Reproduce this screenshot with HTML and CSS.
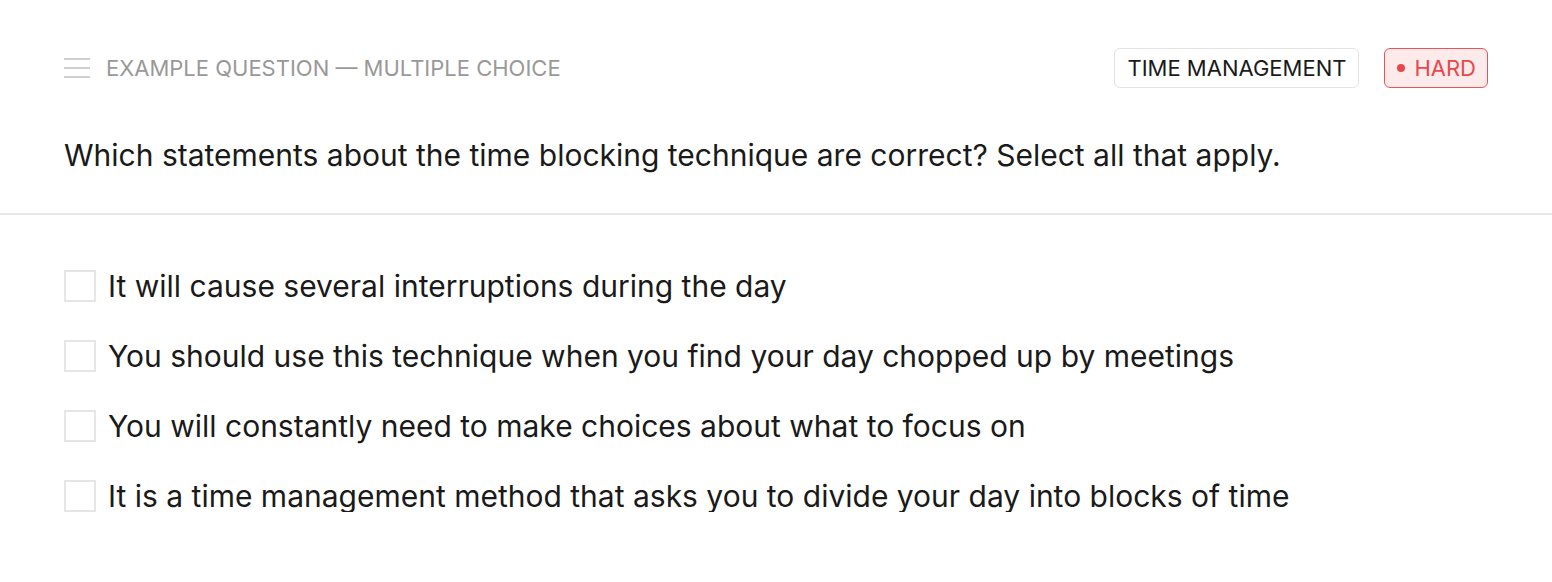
FILE: index.html
```html
<!DOCTYPE html>
<html>
<head>
<meta charset="utf-8">
<link rel="stylesheet" href="styles.css">
</head>
<body>
<div class="card">
  <header class="top">
    <div class="top-left">
      <svg class="menu" width="26" height="20" viewBox="0 0 26 20"><rect x="0" y="0" width="26" height="2" fill="#d0d0d0"/><rect x="0" y="9" width="26" height="2" fill="#d0d0d0"/><rect x="0" y="18" width="26" height="2" fill="#d0d0d0"/></svg>
      <span class="kicker">EXAMPLE QUESTION — MULTIPLE CHOICE</span>
    </div>
    <div class="tags">
      <span class="tag">TIME MANAGEMENT</span>
      <span class="tag hard"><span class="dot"></span>HARD</span>
    </div>
  </header>
  <p class="question">Which statements about the time blocking technique are correct? Select all that apply.</p>
  <hr class="divider">
  <ul class="options">
    <li class="option"><span class="box"></span><span>It will cause several interruptions during the day</span></li>
    <li class="option"><span class="box"></span><span>You should use this technique when you find your day chopped up by meetings</span></li>
    <li class="option"><span class="box"></span><span>You will constantly need to make choices about what to focus on</span></li>
    <li class="option"><span class="box"></span><span>It is a time management method that asks you to divide your day into blocks of time</span></li>
  </ul>
</div>
</body>
</html>
```
FILE: styles.css
```css
html, body { margin: 0; padding: 0; background: #fff; }
body { font-family: Inter, "Noto Sans", sans-serif; color: #1a1a1a; }
.card { width: 1552px; }
.top { display: flex; justify-content: space-between; align-items: center; padding: 48px 64px 0 64px; height: 40px; }
.top-left { display: flex; align-items: center; gap: 16px; }
.menu { display: block; }
.kicker { font-size: 22px; color: #999; }
.tags { display: flex; gap: 25px; align-items: center; }
.tag { box-sizing: border-box; height: 40px; display: inline-flex; align-items: center; padding: 0 12px; border: 1px solid #e3e3e3; border-radius: 6px; font-size: 22px; color: #1a1a1a; }
.tag.hard { background: #fdeaea; border-color: #e9555a; color: #e5484d; padding: 0 11px 0 12px; }
.dot { width: 8px; height: 8px; border-radius: 50%; background: #e5484d; margin-right: 9px; }
.question { margin: 0; padding: 49px 64px 40px; font-size: 30px; line-height: 36px; }
.divider { margin: 0; border: 0; border-top: 2px solid #e6e6e6; }
.options { list-style: none; margin: 0; padding: 55px 64px 0; display: flex; flex-direction: column; gap: 38px; }
.option { display: flex; align-items: center; gap: 12px; font-size: 30px; line-height: 32px; }
.box { box-sizing: border-box; width: 32px; height: 32px; border: 2px solid #e6e6e6; flex: none; }
```
